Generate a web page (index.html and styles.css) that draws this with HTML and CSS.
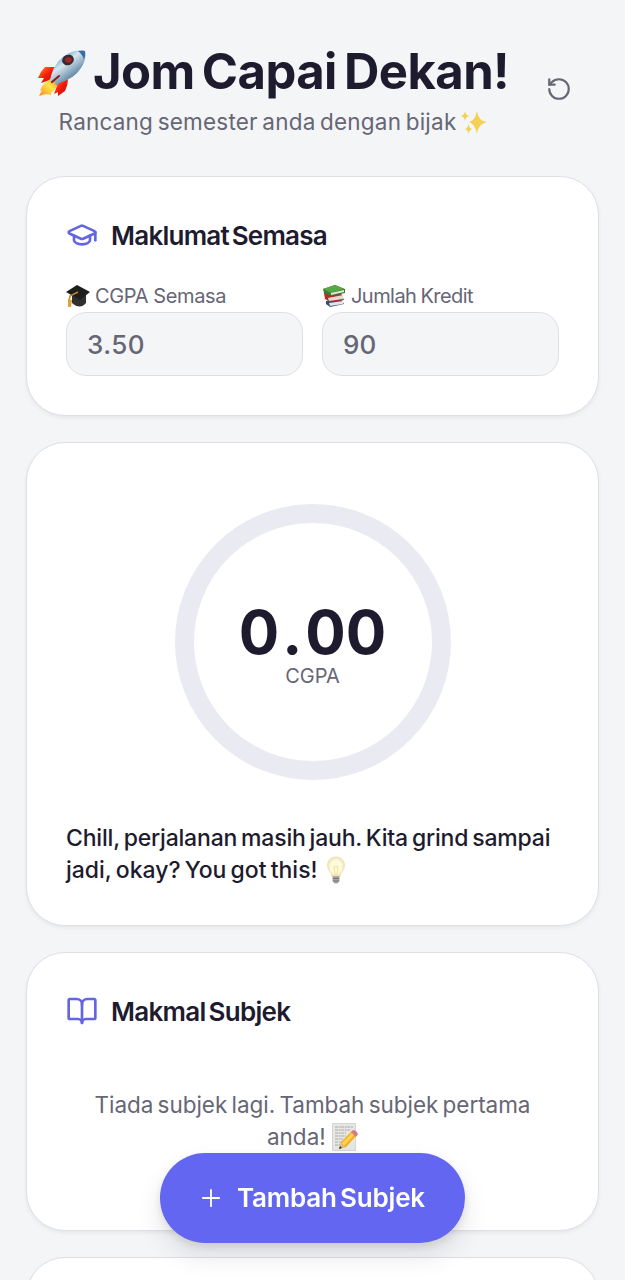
FILE: index.html
```
<!DOCTYPE html>
<html lang="ms">
<head>
<meta charset="utf-8">
<title>Jom Capai Dekan!</title>
<link rel="stylesheet" href="styles.css">
</head>
<body>
<header class="header">
  <div class="heading">
    <h1 class="title">
      <svg class="rocket" viewBox="0 0 50 47">
        <defs>
          <linearGradient id="hull" x1="0.2" y1="0.1" x2="0.8" y2="0.9"><stop offset="0" stop-color="#4d8fc4"/><stop offset=".35" stop-color="#d8e6ed"/><stop offset=".65" stop-color="#84a4bd"/><stop offset="1" stop-color="#39536d"/></linearGradient>
          <linearGradient id="fin" x1="0" y1="0" x2="1" y2="1"><stop offset="0" stop-color="#ff8a24"/><stop offset=".5" stop-color="#f5180c"/><stop offset="1" stop-color="#a9140d"/></linearGradient>
          <linearGradient id="flame" x1="1" y1="0" x2="0" y2="1"><stop offset="0" stop-color="#ef7f1e"/><stop offset=".45" stop-color="#ffe64a"/><stop offset="1" stop-color="#f58a22"/></linearGradient>
        </defs>
        <path d="M19 17 8 17Q3 22 1 28L7 28 4 33 13 30Z" fill="url(#fin)"/>
        <path d="M31 29Q31 35 28 41L21 46 21 42 17 44 21 33Z" fill="url(#fin)"/>
        <path d="M16 28Q6 31 3 41L5 40 2 46Q9 43 14 45L14 43Q19 40 21 32Z" fill="url(#flame)"/>
        <path d="M14 26Q18 10 32 3Q41-1 48 1Q50 9 44 18Q37 29 22 33L20 36 17 32 13 31Z" fill="url(#hull)"/>
        <path d="M41 1Q46 0 48 1Q49 5 47 10Q46 5 41 1Z" fill="#356eab"/>
        <path d="m15 32 7-6" stroke="#8d1e17" stroke-width="2" stroke-linecap="round"/>
        <ellipse cx="31" cy="10" rx="6" ry="5.2" fill="#342c33" transform="rotate(-25 31 10)"/>
        <ellipse cx="31.400" cy="10" rx="3.4" ry="2.8" fill="#a52425"/>
      </svg><span>Jom Capai Dekan!</span>
    </h1>
    <p class="subtitle"><span>Rancang semester anda dengan bijak</span>
      <svg class="sparkles" viewBox="0 0 26 25"><g fill="#f3d155"><path d="M16 1Q17 11 26 12Q17 14 16 24Q14 14 8 12Q14 11 16 1Z"/><path d="M4 1Q4.500 5 8 6Q4.500 7 4 11Q3.500 7 0 6Q3.500 5 4 1Z"/><path d="M7.500 14Q8 18 11 19Q8 20 7.500 24Q7 20 4 19Q7 18 7.500 14Z"/></g></svg>
    </p>
  </div>
  <button class="reset" aria-label="Set semula">
    <svg viewBox="0 0 24 24"><path d="M3 12a9 9 0 1 0 9-9 9.750 9.750 0 0 0-6.740 2.740L3 8"/><path d="M3 3v5h5"/></svg>
  </button>
</header>

<main class="cards">
  <section class="card current">
    <h2 class="card-title">
      <svg viewBox="0 0 24 24"><path d="M21.420 10.922a1 1 0 0 0-.019-1.838L12.830 5.180a2 2 0 0 0-1.660 0L2.600 9.080a1 1 0 0 0 0 1.832l8.570 3.908a2 2 0 0 0 1.660 0z"/><path d="M22 10v6"/><path d="M6 12.500V16a6 3 0 0 0 12 0v-3.500"/></svg>
      <span class="t-info">Maklumat Semasa</span>
    </h2>
    <div class="fields">
      <label class="field">
        <span class="label">
          <svg viewBox="0 0 24 24"><path d="M6 11v8q8 7 14 0v-8z" fill="#30302f"/><path d="M0 8 11 1l13 7-10 8z" fill="#1e1e1f"/><path d="m12 8-8 4-1 5" fill="none" stroke="#bd842c" stroke-width="1.500"/><path d="m2 15 4 1-1 7H2z" fill="#dca344"/></svg>
          <span class="l-cgpa">CGPA Semasa</span>
        </span>
        <span class="input i-cgpa">3.50</span>
      </label>
      <label class="field">
        <span class="label">
          <svg viewBox="0 0 24 24"><path d="m4 17 15-2 3 5-14 3-4-3z" fill="#334e77"/><path d="m7 19 14-2v3L8 22z" fill="#e4e3df"/><path d="m2 9 17 0 3 7-14 2-5-3z" fill="#b52c2a"/><path d="m6 14 15-3v4L7 17z" fill="#ead7d2"/><path d="M1 5 13 1l10 4v4L9 12 2 9z" fill="#357e34"/><path d="M1 5 13 1l9 4L9 9z" fill="#58a744"/><path d="m9 9 13-3v2L9 11z" fill="#e5eadb"/></svg>
          <span class="l-credit">Jumlah Kredit</span>
        </span>
        <span class="input">90</span>
      </label>
    </div>
  </section>

  <section class="card progress">
    <div class="ring">
      <strong class="score">0<span class="dot">.</span>00</strong>
      <span class="unit">CGPA</span>
    </div>
    <p class="message"><span class="m-one">Chill, perjalanan masih jauh. Kita grind sampai</span><br><span class="m-two">jadi, okay? You got this!</span>
      <svg class="bulb" viewBox="0 0 20 28"><defs><radialGradient id="glass"><stop offset="0" stop-color="#fffbd5"/><stop offset=".65" stop-color="#fff9df"/><stop offset="1" stop-color="#f1e3ac"/></radialGradient></defs><path d="M10 1C4.500 1 1.500 5 1.500 9.500c0 5 4 6 4.500 11h8c.5-5 4.500-6 4.500-11C18.500 5 15.500 1 10 1Z" fill="url(#glass)" stroke="#eadfae" stroke-width=".8"/><path d="m8 10 1 10m3-10-1 10M8 10l2 1 2-1" fill="none" stroke="#eeda98" stroke-width=".8"/><path d="M6.500 20h7v5l-2 2.500h-3l-2-2.500z" fill="#aaa8a6"/><path d="M7 22.500h6M7 25h6" stroke="#77716e"/></svg>
    </p>
  </section>

  <section class="card lab">
    <h2 class="card-title">
      <svg viewBox="0 0 24 24"><path d="M12 7v14"/><path d="M3 18a1 1 0 0 1-1-1V4a1 1 0 0 1 1-1h5a4 4 0 0 1 4 4 4 4 0 0 1 4-4h5a1 1 0 0 1 1 1v13a1 1 0 0 1-1 1h-6a3 3 0 0 0-3 3 3 3 0 0 0-3-3z"/></svg>
      <span class="t-lab">Makmal Subjek</span>
    </h2>
    <p class="empty"><span class="e-one">Tiada subjek lagi. Tambah subjek pertama</span><br><span>anda!</span>
      <svg class="memo" viewBox="0 0 26 28"><path d="M.5.5h23v27H.5z" fill="#e6e6e3" stroke="#d5d5d2"/><path d="M3 4h18M3 7h16M3 10h11M3 13h11M3 16h8M3 19h7M3 22h5" stroke="#aaa" stroke-dasharray="3 .7 2 .5"/><path d="m7 26 2-7L20 8l5 4-11 12z" fill="#f0ae25"/><path d="m10 20 11-11 2 2-11 12z" fill="#ffd34a"/><path d="m19 9 2-2q3 0 5 4l-2 3z" fill="#d87881"/><path d="m7 26 2-7 4 5z" fill="#dfbd87"/><path d="m7 26 1-3 2 2z" fill="#333"/></svg>
    </p>
  </section>

  <section class="card next"></section>
</main>

<button class="add">
  <svg viewBox="0 0 24 24"><path d="M4.500 12h15M12 4.500v15"/></svg>
  <span>Tambah Subjek</span>
</button>
</body>
</html>
```
FILE: styles.css
```
* {
  box-sizing: border-box;
}

body {
  display: flow-root;
  margin: 0;
  height: 1280px;
  overflow: hidden;
  background: #f4f5f7;
  color: #1e1b2e;
  font-family: Inter, "Liberation Sans", sans-serif;
}

h1, h2, p {
  margin: 0;
}

button {
  border: 0;
  padding: 0;
  font-family: inherit;
}

.header {
  display: flex;
  align-items: flex-start;
  height: 176px;
  padding: 43px 43px 0 37px;
}

.heading {
  width: 472px;
}

.title {
  display: flex;
  gap: 6px;
  height: 62px;
  padding-top: 1px;
  font-size: 49px;
  font-weight: 700;
  line-height: 56px;
  letter-spacing: -.55px;
  word-spacing: -4px;
  white-space: nowrap;
}

.rocket {
  flex: none;
  width: 50px;
  height: 47px;
  margin-top: 6px;
}

.subtitle {
  display: flex;
  justify-content: center;
  gap: 5px;
  font-size: 22.5px;
  line-height: 33px;
  letter-spacing: .21px;
  word-spacing: -2px;
  color: #666675;
  white-space: nowrap;
}

.sparkles {
  width: 26px;
  height: 25px;
  margin-top: 5px;
}

.reset {
  display: grid;
  place-items: center;
  width: 46px;
  height: 46px;
  margin: 23px 0 0 27px;
  background: none;
}

.reset svg {
  width: 26px;
  height: 26px;
  fill: none;
  stroke: #666675;
  stroke-width: 2;
  stroke-linecap: round;
  stroke-linejoin: round;
}

.cards {
  display: flex;
  flex-direction: column;
  gap: 26px;
  height: 1104px;
  padding: 0 26px;
  overflow: hidden;
}

.card {
  flex: none;
  padding: 39px;
  border: 1px solid #dfe0e5;
  border-radius: 39px;
  background: #fff;
  box-shadow: 0 2px 4px rgba(20, 20, 40, .06);
}

.current {
  height: 240px;
}

.card-title {
  display: flex;
  align-items: center;
  gap: 13px;
  height: 38px;
  font-size: 26px;
  font-weight: 600;
  word-spacing: -3px;
  white-space: nowrap;
}

.card-title svg {
  width: 32px;
  height: 32px;
  fill: none;
  stroke: #6366e0;
  stroke-width: 2;
  stroke-linecap: round;
  stroke-linejoin: round;
}

.t-info {
  letter-spacing: -.76px;
}

.t-lab {
  letter-spacing: -.7px;
}

.fields {
  display: grid;
  grid-template-columns: 1fr 1fr;
  gap: 19px;
  margin-top: 28px;
}

.field {
  display: flex;
  flex-direction: column;
}

.label {
  display: flex;
  align-items: center;
  gap: 5px;
  height: 30px;
  padding-bottom: 3px;
  font-size: 20px;
  color: #666675;
  white-space: nowrap;
}

.label svg {
  width: 24px;
  height: 24px;
}

.l-cgpa {
  letter-spacing: -.39px;
}

.l-credit {
  letter-spacing: -.55px;
  word-spacing: -1px;
}

.input {
  height: 64px;
  padding-left: 20px;
  border: 1px solid #dfe0e5;
  border-radius: 20px;
  background: #f4f5f7;
  color: #666675;
  font-size: 26px;
  font-weight: 500;
  line-height: 64px;
}

.i-cgpa {
  letter-spacing: .46px;
}

.progress {
  height: 484px;
  padding-top: 61px;
}

.ring {
  display: flex;
  flex-direction: column;
  align-items: center;
  width: 276px;
  height: 276px;
  margin: 0 auto;
  padding-top: 79px;
  border: 19px solid #eaeaf2;
  border-radius: 50%;
}

.score {
  font-size: 60px;
  font-weight: 700;
  line-height: 60px;
}

.dot {
  margin: 0 3px;
}

.unit {
  font-size: 20px;
  line-height: 28px;
  color: #666675;
}

.message {
  margin-top: 42px;
  font-size: 23px;
  font-weight: 500;
  line-height: 32px;
  word-spacing: -2px;
  white-space: nowrap;
}

.m-one {
  letter-spacing: -.19px;
}

.m-two {
  letter-spacing: 0;
}

.bulb {
  width: 20px;
  height: 28px;
  margin-left: 4px;
  vertical-align: -6px;
}

.lab {
  height: 279px;
}

.empty {
  margin-top: 59px;
  font-size: 22.5px;
  line-height: 32px;
  word-spacing: -2px;
  color: #666675;
  text-align: center;
  white-space: nowrap;
}

.e-one {
  letter-spacing: -.04px;
}

.memo {
  width: 26px;
  height: 28px;
  margin-left: 2px;
  vertical-align: -6px;
}

.next {
  height: 200px;
}

.add {
  position: fixed;
  left: 160px;
  top: 1153px;
  display: flex;
  align-items: center;
  justify-content: center;
  gap: 13px;
  width: 305px;
  height: 90px;
  padding: 0 2px 1px 0;
  border-radius: 45px;
  background: #6366f1;
  color: #fff;
  font-size: 26px;
  font-weight: 600;
  letter-spacing: -.2px;
  word-spacing: -3px;
  white-space: nowrap;
  box-shadow: 0 13px 26px rgba(20, 20, 40, .1), 0 4px 10px rgba(20, 20, 40, .1);
}

.add svg {
  width: 26px;
  height: 26px;
  stroke: #fff;
  stroke-width: 1.7;
  stroke-linecap: round;
}
```
